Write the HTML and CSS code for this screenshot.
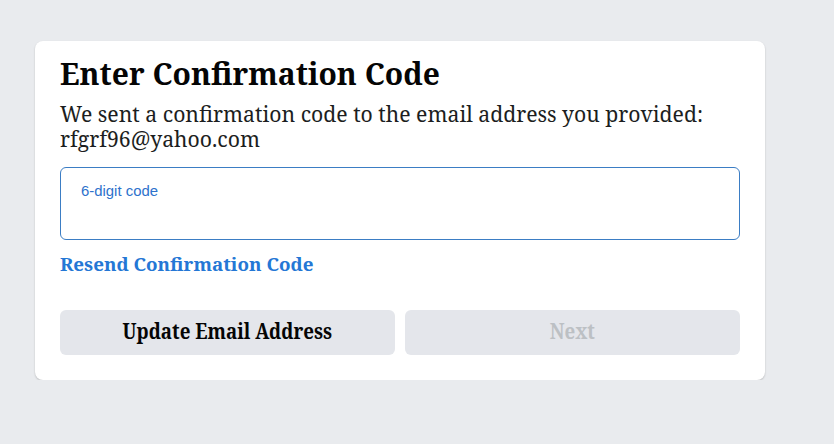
FILE: index.html
```html
<!DOCTYPE html>
<html>
<head>
<meta charset="utf-8">
<link rel="stylesheet" href="styles.css">
</head>
<body>
<div class="page">
  <div class="card">
    <h1 class="title">Enter Confirmation Code</h1>
    <p class="desc">We sent a confirmation code to the email address you provided: rfgrf96@yahoo.com</p>
    <div class="field">
      <span class="label">6-digit code</span>
    </div>
    <a class="resend" href="#">Resend Confirmation Code</a>
    <div class="actions">
      <button class="btn"><span class="btn-text">Update Email Address</span></button>
      <button class="btn disabled"><span class="btn-text">Next</span></button>
    </div>
  </div>
</div>
</body>
</html>
```
FILE: styles.css
```css
html, body {
  margin: 0;
  padding: 0;
  background: #e9ebee;
}
body {
  font-family: "Noto Serif", "DejaVu Serif", serif;
  color: #1c1e21;
}
.page {
  padding: 41px 0 0 35px;
}
.card {
  width: 730px;
  box-sizing: border-box;
  background: #fff;
  border-radius: 8px;
  box-shadow: 0 1px 2px rgba(0,0,0,0.2);
  padding: 15px 25px 25px 25px;
}
.title {
  margin: 0;
  font-size: 30px;
  font-weight: 700;
  color: #050505;
  line-height: 36px;
}
.desc {
  margin: 9px 0 0 0;
  font-size: 21.2px;
  line-height: 25px;
  color: #1c1e21;
}
.field {
  margin-top: 16px;
  height: 73px;
  box-sizing: border-box;
  border: 1px solid #3b7dc4;
  border-radius: 6px;
  padding: 14px 20px 0 20px;
  line-height: 17px;
}
.label {
  font-family: "Liberation Sans", Arial, sans-serif;
  font-size: 14.9px;
  color: #2e72cc;
}
.resend {
  display: block;
  margin-top: 12px;
  font-size: 18.8px;
  font-weight: 700;
  color: #2477d5;
  text-decoration: none;
  line-height: 24px;
}
.actions {
  margin-top: 34px;
  display: flex;
  gap: 10px;
}
.btn {
  flex: 1;
  height: 45px;
  padding: 0 0 3px 0;
  border: none;
  border-radius: 6px;
  background: #e4e6eb;
  font-family: "Noto Serif", "DejaVu Serif", serif;
  font-size: 21px;
  font-weight: 700;
  color: #050505;
}
.btn-text {
  display: inline-block;
  transform: scaleX(0.893);
}
.btn.disabled {
  color: #bcc0c4;
}
```
